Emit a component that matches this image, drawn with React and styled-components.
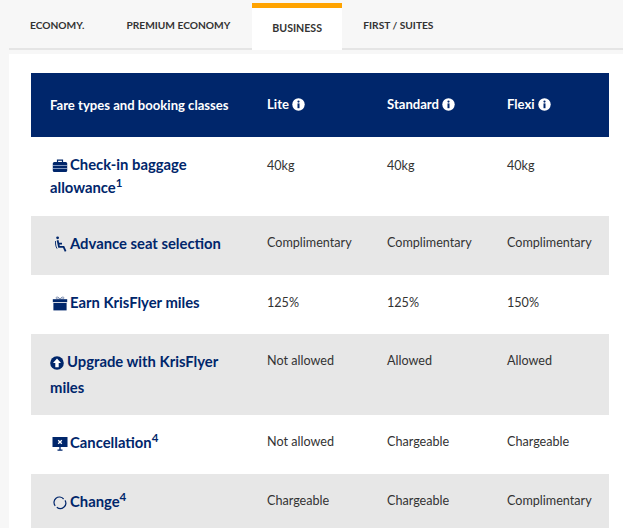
import React from "react";
import styled, { createGlobalStyle } from "styled-components";

const navy = "#00266b";

const GlobalStyle = createGlobalStyle`
  html, body {
    margin: 0;
    height: 528px;
    overflow: hidden;
    background: #f7f7f7;
    font-family: "Lato", "Liberation Sans", sans-serif;
  }
`;

const Page = styled.div`
  padding: 3px 0 0 9px;
`;

const TabBar = styled.div`
  display: flex;
  height: 45px;
  border-bottom: 2px solid #e5e5e5;
`;

const Tab = styled.div`
  box-sizing: border-box;
  height: 45px;
  padding: 14px 21px 0;
  color: #333;
  font-size: 10.2px;
  line-height: 16px;
  font-weight: 700;
  white-space: nowrap;
`;

const ActiveTab = styled(Tab)`
  width: 90px;
  height: 47px;
  margin-left: 1px;
  padding: 12px 0 0 20px;
  background: #fff;
  border-top: 5px solid #ffa300;
  font-size: 10.6px;
`;

const Panel = styled.div`
  margin-top: 4px;
  padding: 19px 14px 0 22px;
  background: #fff;
`;

const HeaderRow = styled.div`
  display: grid;
  grid-template-columns: 236px 120px 120px 102px;
  align-items: center;
  height: 64px;
  background: ${navy};
  color: #fff;
  font-size: 13.1px;
  font-weight: 700;
`;

const HeaderTitle = styled.div`
  padding-left: 19px;
`;

const HeaderCell = styled.div`
  display: flex;
  align-items: center;
  gap: 3px;
  margin-top: -2px;
`;

const Row = styled.div`
  display: grid;
  grid-template-columns: 236px 120px 120px 102px;
  height: ${(p) => p.$height}px;
  background: ${(p) => (p.$shaded ? "#e7e7e7" : "#fff")};
`;

const Label = styled.div`
  padding: ${(p) => (p.$flush ? "14px" : "16px")} 30px 0 19px;
  color: ${navy};
  font-size: 14.8px;
  line-height: ${(p) => (p.$flush ? "26px" : "23px")};
  font-weight: 700;

  svg {
    vertical-align: -3px;
    margin: ${(p) => (p.$flush ? "0 3px 0 0" : "0 2px 0 2px")};
  }

  sup {
    font-size: 11.5px;
    line-height: 0;
  }
`;

const Value = styled.div`
  padding-top: ${(p) => p.$top}px;
  color: #333;
  font-size: 12.6px;
  line-height: 23px;
`;

const InfoIcon = () => (
  <svg width="13" height="13" viewBox="0 0 13 13">
    <circle cx="6.5" cy="6.5" r="6.2" fill="#fff" />
    <rect x="5.5" y="5.4" width="2" height="4.8" fill={navy} />
    <circle cx="6.5" cy="3.6" r="1.1" fill={navy} />
  </svg>
);

const BaggageIcon = () => (
  <svg width="16" height="14" viewBox="0 0 16 14">
    <path d="M5.5 3V1.2h5V3" fill="none" stroke={navy} strokeWidth="1.2" />
    <rect x="0.8" y="3" width="14.4" height="10" rx="1.5" fill={navy} />
    <path d="M1 6.5h14M1 9.5h14" stroke="#8fa3c8" strokeWidth="0.9" />
  </svg>
);

const SeatIcon = () => (
  <svg width="16" height="16" viewBox="-2 0 16 16">
    <circle cx="3.6" cy="1.8" r="1.4" fill={navy} />
    <path
      d="M3.6 4.2l1.4 6.6h4.6l2 4.6M4.6 7.6h3.4"
      fill="none"
      stroke={navy}
      strokeWidth="1.8"
    />
    <path d="M1.6 5c-.4 2.6.2 5.6 1.4 7.6" fill="none" stroke={navy} strokeWidth="0.9" />
  </svg>
);

const GiftIcon = () => (
  <svg width="16" height="15" viewBox="0 0 16 15">
    <path
      d="M8 3C6.5.6 4 .6 4 2c0 1 2 1 4 1 2 0 4 0 4-1 0-1.4-2.5-1.4-4 1z"
      fill="none"
      stroke="#7f8fb0"
      strokeWidth="1"
    />
    <rect x="0.8" y="3.2" width="14.4" height="3" fill={navy} />
    <rect x="1.4" y="7" width="13.2" height="7.4" fill={navy} />
  </svg>
);

const UpgradeIcon = () => (
  <svg width="14" height="14" viewBox="0 0 14 14">
    <circle cx="7" cy="7" r="6.8" fill={navy} />
    <path d="M7 2.6L11 7H8.7v4.2H5.3V7H3z" fill="#fff" />
  </svg>
);

const CancelIcon = () => (
  <svg width="16" height="15" viewBox="0 0 16 15">
    <rect x="0.5" y="1" width="15" height="10" fill={navy} />
    <path d="M6.2 4.2l3.6 3.6M9.8 4.2L6.2 7.8" stroke="#fff" strokeWidth="1.3" />
    <path d="M8 11v3M5.5 14.2h5" stroke={navy} strokeWidth="1.3" />
  </svg>
);

const ChangeIcon = () => (
  <svg width="16" height="14" viewBox="0 0 16 14">
    <path
      d="M3.2 9.8A5.4 5.4 0 0 1 11.6 3M13 4.4A5.4 5.4 0 0 1 4.8 11.2"
      fill="none"
      stroke={navy}
      strokeWidth="1.2"
    />
  </svg>
);

const tabs = [
  { name: "ECONOMY." },
  { name: "PREMIUM ECONOMY" },
  { name: "BUSINESS", active: true },
  { name: "FIRST / SUITES" },
];

const rows = [
  {
    icon: <BaggageIcon />,
    label: "Check-in baggage allowance",
    note: "1",
    values: ["40kg", "40kg", "40kg"],
    height: 79,
    top: 17,
  },
  {
    icon: <SeatIcon />,
    label: "Advance seat selection",
    values: ["Complimentary", "Complimentary", "Complimentary"],
    height: 59,
    top: 15,
    shaded: true,
  },
  {
    icon: <GiftIcon />,
    label: "Earn KrisFlyer miles",
    values: ["125%", "125%", "150%"],
    height: 59,
    top: 16,
  },
  {
    icon: <UpgradeIcon />,
    label: "Upgrade with KrisFlyer miles",
    values: ["Not allowed", "Allowed", "Allowed"],
    height: 81,
    top: 15,
    shaded: true,
    flush: true,
  },
  {
    icon: <CancelIcon />,
    label: "Cancellation",
    note: "4",
    values: ["Not allowed", "Chargeable", "Chargeable"],
    height: 59,
    top: 15,
  },
  {
    icon: <ChangeIcon />,
    label: "Change",
    note: "4",
    values: ["Chargeable", "Chargeable", "Complimentary"],
    height: 59,
    top: 15,
    shaded: true,
  },
];

const App = () => (
  <Page>
    <GlobalStyle />
    <TabBar>
      {tabs.map((tab) =>
        tab.active ? (
          <ActiveTab key={tab.name}>{tab.name}</ActiveTab>
        ) : (
          <Tab key={tab.name}>{tab.name}</Tab>
        )
      )}
    </TabBar>
    <Panel>
      <HeaderRow>
        <HeaderTitle>Fare types and booking classes</HeaderTitle>
        {["Lite", "Standard", "Flexi"].map((fare) => (
          <HeaderCell key={fare}>
            {fare}
            <InfoIcon />
          </HeaderCell>
        ))}
      </HeaderRow>
      {rows.map((row) => (
        <Row key={row.label} $height={row.height} $shaded={row.shaded}>
          <Label $flush={row.flush}>
            {row.icon}
            {row.label}
            {row.note && <sup>{row.note}</sup>}
          </Label>
          {row.values.map((value, index) => (
            <Value key={index} $top={row.top}>
              {value}
            </Value>
          ))}
        </Row>
      ))}
    </Panel>
  </Page>
);

export default App;
